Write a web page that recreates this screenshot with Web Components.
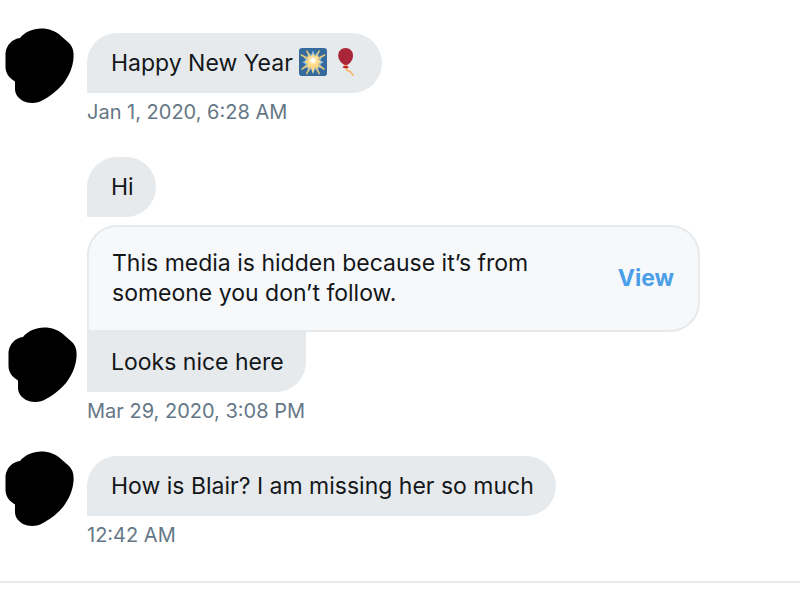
<!DOCTYPE html>
<html lang="en">
<head>
<meta charset="utf-8">
<meta name="viewport" content="width=device-width, initial-scale=1">
<title>Messages</title>
<style>
  body {
    margin: 0;
    background: #fff;
    color: #14171a;
    font: 23px/30px Inter, "Liberation Sans", sans-serif;
    --bubble: #e6eaed;
    --muted: #657786;
    --card: #f6f8fa;
    --accent: #4a9fe8;
  }
</style>
</head>
<body>
<chat-thread>
  <message-group time="Jan 1, 2020, 6:28 AM">
    <user-avatar slot="avatar"></user-avatar>
    <message-bubble>Happy New Year <emoji-icon name="sparkler"></emoji-icon><emoji-icon name="balloon"></emoji-icon></message-bubble>
  </message-group>
  <message-group time="Mar 29, 2020, 3:08 PM">
    <user-avatar slot="avatar" class="right"></user-avatar>
    <message-bubble>Hi</message-bubble>
    <hidden-media>This media is hidden because it’s from someone you don’t follow.</hidden-media>
    <message-bubble joined>Looks nice here</message-bubble>
  </message-group>
  <message-group time="12:42 AM">
    <user-avatar slot="avatar" class="raised"></user-avatar>
    <message-bubble>How is Blair? I am missing her so much</message-bubble>
  </message-group>
</chat-thread>

<script>
const define = (name, html, setup) => customElements.define(name, class extends HTMLElement {
  connectedCallback() {
    if (this.shadowRoot) return;
    const root = this.attachShadow({ mode: "open" });
    const template = document.createElement("template");
    template.innerHTML = html;
    root.append(template.content.cloneNode(true));
    if (setup) setup(this, root);
  }
});

define("chat-thread", `
  <style>
    :host { display: block; }
    main { display: flex; flex-direction: column; gap: 31px; padding: 33px 0 30px; border-bottom: 2px solid var(--bubble); }
  </style>
  <main><slot></slot></main>`);

define("message-group", `
  <style>
    :host { display: grid; grid-template-columns: 87px minmax(0, 1fr); }
    .avatar { align-self: end; }
    .messages { display: flex; flex-direction: column; align-items: flex-start; }
    time { margin-top: 5px; font-size: 20px; line-height: 28px; color: var(--muted); }
  </style>
  <div class="avatar"><slot name="avatar"></slot></div>
  <div class="messages"><slot></slot><time></time></div>`,
  (host, root) => { root.querySelector("time").textContent = host.getAttribute("time"); });

define("message-bubble", `
  <style>
    :host { display: block; box-sizing: border-box; padding: 15px 22px 15px 24px; background: var(--bubble); border-radius: 30px 30px 30px 0; }
    :host([joined]) { border-radius: 0 0 30px 0; }
  </style>
  <slot></slot>`);

define("hidden-media", `
  <style>
    :host { display: flex; align-items: center; justify-content: space-between; gap: 40px; box-sizing: border-box; width: 86%; margin-top: 8px; padding: 21px 24px 22px 23px; background: var(--card); border: 2px solid var(--bubble); border-radius: 30px 30px 30px 0; }
    p { margin: 0; }
    button { padding: 0; border: 0; background: none; color: var(--accent); font: inherit; font-weight: 700; cursor: pointer; }
  </style>
  <p><slot></slot></p>
  <button type="button">View</button>`);

define("user-avatar", `
  <style>
    :host { display: block; }
    :host(.right) { padding-left: 3px; }
    :host(.raised) { padding-bottom: 2px; }
    svg { display: block; overflow: visible; }
  </style>
  <svg width="80" height="93" viewBox="0 0 80 93" role="img" aria-label="Sender">
    <path d="M20 5C25 -1 33 -4.500 41 -4.500C49 -4.500 56 -2 61 3L69 10C73 14 74 19 73.500 25C73 34 69 43 63 51C57 58 49 64 43 67C38 70.500 29 71 23 68C18 65 15 61 15 56L15 48.500C9 45 5.500 40 5.500 34L5.500 20C6.500 12 12 6 20 5Z"/>
  </svg>`);

const emoji = {
  sparkler: ["Sparkler", `
    <rect width="36" height="36" rx="4" fill="#356a9c"/>
    <path fill="#88bce0" d="M18 3l2.500 6 4-4 .5 7 5-1-2.500 5 4.500 2-4.500 3 2.500 5-5-1-.5 6-4-4-2.500 6-2.500-6-4 4-.5-6-5 1 2.500-5L4 18l4.500-2L6 11l5 1 .5-7 4 4z"/>
    <path stroke="#e3c77b" stroke-width="2" stroke-linecap="round" d="M18 17L10 4M18 17L26 4M18 17L3 9M18 17L33 9M18 17L4 27M18 17L32 27M18 17L10 33M18 17L26 33"/>
    <path fill="#ffd983" d="M18 7l2.500 4 4.500-1-.5 4.500L29 18l-4.500 2.500.5 5-4.500-1L18 33l-2.500-8.500-4.500 1 .5-5L7 18l4.500-3.500L11 10l4.500 1z"/>
    <circle cx="18" cy="16" r="5" fill="#ffe8b6"/><circle cx="18" cy="16" r="2.800" fill="#fff"/>`],
  balloon: ["Balloon", `
    <path fill="none" stroke="#f4b55e" stroke-width="2" stroke-linecap="round" d="M18 25C18 29 20 29 23 30C25 31 25 33 27 35"/>
    <path fill="#a92537" d="M27 10C27 17 21 22 18 22C15 22 8 17 8 10C8 4 12 0 17.500 0S27 4 27 10Z"/>
    <path fill="#be1931" d="M17.500 20L13.500 25Q18 27 21.500 25Z"/>
    <path fill="none" stroke="#f4b55e" stroke-width="1.500" d="M15 22.500H20"/>`]
};
define("emoji-icon", `
  <style>
    :host { display: inline-block; width: 28px; height: 28px; margin-right: 5px; vertical-align: middle; margin-top: -6px; }
    :host(:last-child) { margin-right: 0; }
    svg { display: block; width: 100%; height: 100%; }
  </style>
  <svg viewBox="0 0 36 36" role="img"></svg>`,
  (host, root) => {
    const [label, art] = emoji[host.getAttribute("name")];
    const svg = root.querySelector("svg");
    svg.setAttribute("aria-label", label);
    svg.innerHTML = art;
  });
</script>
</body>
</html>
